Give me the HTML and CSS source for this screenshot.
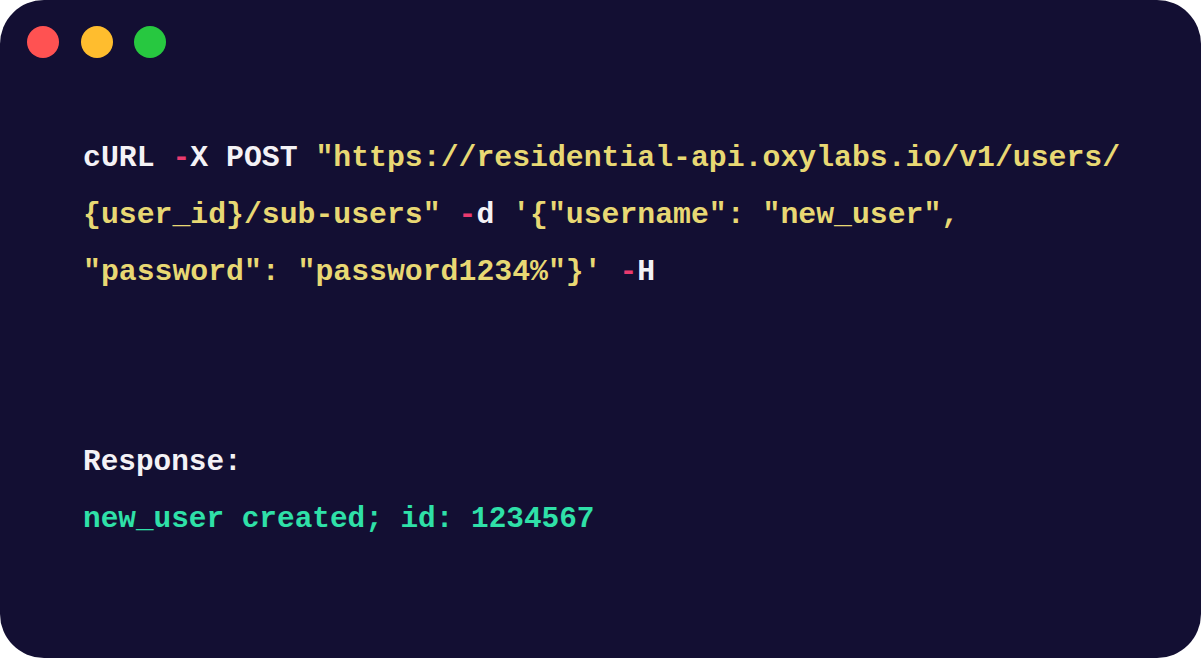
FILE: index.html
```html
<!DOCTYPE html>
<html>
<head>
<meta charset="utf-8">
<link rel="stylesheet" href="styles.css">
</head>
<body>
<div class="window">
  <div class="dots">
    <span class="dot red"></span>
    <span class="dot yellow"></span>
    <span class="dot green"></span>
  </div>
  <div class="code">
    <div class="line"><span class="w">cURL </span><span class="p">-</span><span class="w">X POST </span><span class="s">"https://residential-api.oxylabs.io/v1/users/</span></div>
    <div class="line"><span class="s">{user_id}/sub-users" </span><span class="p">-</span><span class="w">d </span><span class="s">'{"username": "new_user",</span></div>
    <div class="line"><span class="s">"password": "password1234%"}' </span><span class="p">-</span><span class="w">H</span></div>
  </div>
  <div class="response">
    <div class="line w">Response:</div>
    <div class="line g">new_user created; id: 1234567</div>
  </div>
</div>
</body>
</html>
```
FILE: styles.css
```css
html, body {
  margin: 0;
  padding: 0;
  background: #ffffff;
}
.window {
  box-sizing: border-box;
  width: 1201px;
  height: 658px;
  background: #130f33;
  border-radius: 44px;
  padding: 26px 0 0 27px;
  font-family: "Liberation Mono", "DejaVu Sans Mono", monospace;
  font-weight: 700;
  font-size: 29.6px;
}
.dots {
  display: flex;
  gap: 21.5px;
}
.dot {
  width: 32px;
  height: 32px;
  border-radius: 50%;
  display: block;
}
.red { background: #ff5252; }
.yellow { background: #ffbd2e; }
.green { background: #27c840; }
.code {
  margin-top: 72px;
  padding-left: 56px;
  font-size: 29.8px;
}
.response {
  margin-top: 133px;
  padding-left: 56px;
  font-size: 29.4px;
}
.line {
  line-height: 57px;
  height: 57px;
  white-space: pre;
}
.w { color: #f4f2f6; }
.p { color: #ea3a6e; }
.s { color: #e8d873; }
.g { color: #2fe0a8; }
```
